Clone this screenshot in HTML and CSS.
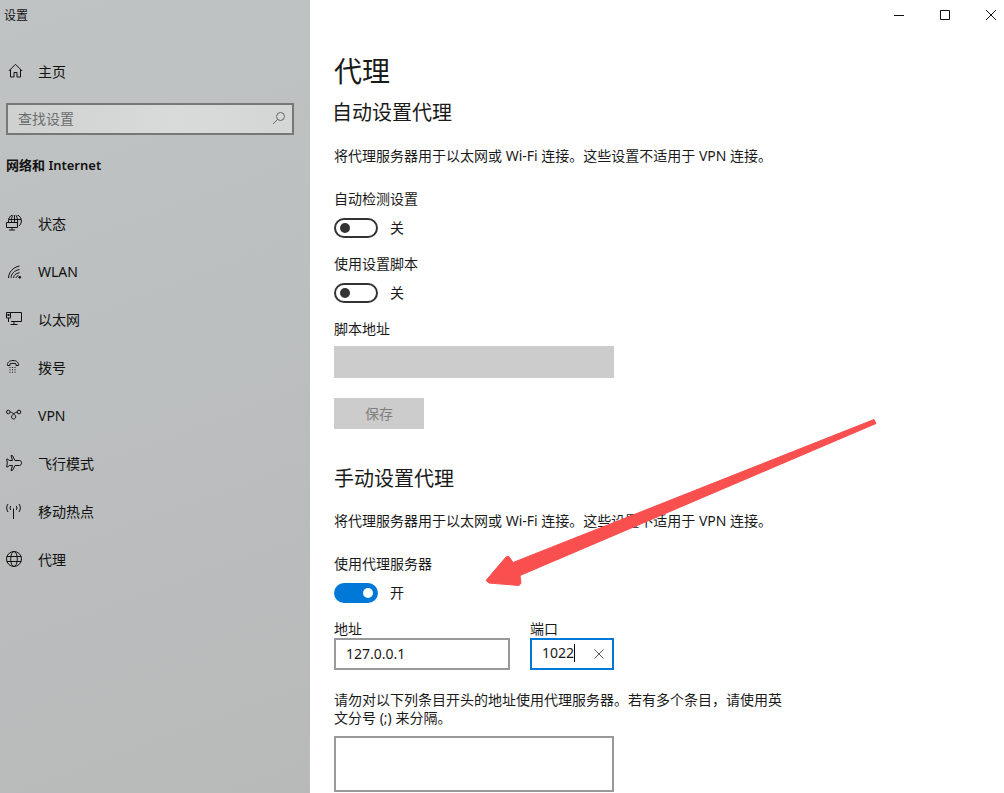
FILE: index.html
```html
<!DOCTYPE html>
<html lang="zh-CN">
<head>
<meta charset="utf-8">
<title>设置</title>
<link rel="stylesheet" href="styles.css">
</head>
<body>
<div class="app">
  <aside class="sidebar">
    <div class="app-title">设置</div>
    <div class="nav-item nav-home">
      <svg class="icon" viewBox="0 0 16 16"><path d="M.8 8 7.500 1.300 14.200 8M2.500 6.500v7.500h3.500V9.500h3V14h3.500V6.500"/></svg>
      <span class="home-label">主页</span>
    </div>
    <div class="search">
      <span>查找设置</span>
      <svg class="search-icon" viewBox="0 0 14 14"><circle cx="8.500" cy="5.500" r="4"/><path d="M5.600 8.400 1 13"/></svg>
    </div>
    <div class="section-head">网络和 Internet</div>
    <nav class="nav-list">
      <div class="nav-item">
        <svg class="icon" viewBox="0 0 16 16"><path d="M2.600 7.500A6.500 6.500 0 1 1 13 11M2.500 4.500H15M8.500.2V7.500M5.600 7.500C5 5 5.500 2 7 .5M11.300 9.500C12 6.500 11.800 3 10 .5M.5 7.500h11v5H.5zM6 12.500v2.500M3 15h6"/></svg>
        <span>状态</span>
      </div>
      <div class="nav-item">
        <svg class="icon icon-wifi" viewBox="0 0 16 16"><path d="M2.500 15C2.700 9.500 6.500 4.500 13.500 3M5 15c.2-4 3-7.500 8.500-8.500M7.500 15c.2-2.500 2-4.600 6-5.300M10 15c.2-1.200 1-2 2.500-2.300"/><circle class="solid" cx="13.800" cy="14.300" r="1.300"/></svg>
        <span>WLAN</span>
      </div>
      <div class="nav-item">
        <svg class="icon" viewBox="0 0 16 16"><path d="M4.500 1.500H15.500V10.500H5M8 10.500V13.500M4.500 13.500H11.500M.5 1.500H4.500V7H.5zM2.500 7V11"/><rect class="solid" x="1.500" y="3" width="2" height="2"/></svg>
        <span>以太网</span>
      </div>
      <div class="nav-item">
        <svg class="icon" viewBox="0 0 16 16"><path d="M1.500 6.500C1 3.500 3.500 1.500 7 1.500s6 2 5.500 5H10V4.800C9 4.200 5 4.200 4 4.800V6.500Z"/><path class="dots" d="M3.500 8.500h7M3.500 10.800h7M3.500 13.200h7"/></svg>
        <span>拨号</span>
      </div>
      <div class="nav-item">
        <svg class="icon" viewBox="0 0 16 16"><circle cx="2.300" cy="5" r="1.800"/><circle cx="13" cy="5" r="1.800"/><path d="M4.100 5c2 .2 4 2 5.200 3.500 1.200 1.800-.2 3.500-1.700 3.500-1.700 0-2.700-1.800-1.700-3.300C7 7 9 5.500 11.200 5"/></svg>
        <span>VPN</span>
      </div>
      <div class="nav-item">
        <svg class="icon" viewBox="0 0 16 16"><path d="M5 .6h1.500L9 5.500h4.500c1 0 2.300 1.200 2.300 2.500s-1.300 2.500-2.300 2.500H9L6.500 15.400H5L6.500 10.500H3.200L1.800 12H.7L1.300 8 .7 4H1.800L3.200 5.500H6.500Z"/></svg>
        <span>飞行模式</span>
      </div>
      <div class="nav-item">
        <svg class="icon" viewBox="0 0 16 16"><path d="M7.500 5.500V16M2 1C.2 3.300.2 6.500 2 9M13 1c1.800 2.300 1.800 5.500 0 8M4.800 3C3.800 4.300 3.800 5.800 4.800 7M10.200 3c1 1.300 1 2.800 0 4"/></svg>
        <span>移动热点</span>
      </div>
      <div class="nav-item">
        <svg class="icon" viewBox="0 0 16 16"><circle cx="8" cy="8" r="7.500"/><ellipse cx="8" cy="8" rx="3.300" ry="7.500"/><path d="M.8 5.500h14.400M.8 10.500h14.400"/></svg>
        <span>代理</span>
      </div>
    </nav>
  </aside>

  <main class="main">
    <div class="window-controls">
      <svg class="win-btn" viewBox="0 0 46 30"><path d="M18 15.500h10"/></svg>
      <svg class="win-btn" viewBox="0 0 46 30"><path d="M18.500 10.500h9v9h-9z"/></svg>
      <svg class="win-btn" viewBox="0 0 46 30"><path d="M18 10l10 10M28 10 18 20"/></svg>
    </div>
    <h1 class="page-title">代理</h1>
    <h2 class="group-title first">自动设置代理</h2>
    <p class="text desc">将代理服务器用于以太网或 Wi-Fi 连接。这些设置不适用于 VPN 连接。</p>
    <div class="text field-label">自动检测设置</div>
    <div class="switch-row"><span class="switch"></span><span class="text">关</span></div>
    <div class="text field-label">使用设置脚本</div>
    <div class="switch-row"><span class="switch"></span><span class="text">关</span></div>
    <div class="text field-label">脚本地址</div>
    <div class="disabled-input"></div>
    <div class="disabled-button">保存</div>
    <h2 class="group-title second">手动设置代理</h2>
    <p class="text desc manual">将代理服务器用于以太网或 Wi-Fi 连接。这些设置不适用于 VPN 连接。</p>
    <div class="text field-label">使用代理服务器</div>
    <div class="switch-row"><span class="switch on"></span><span class="text">开</span></div>
    <div class="addr-row">
      <div class="addr-col">
        <label class="text">地址</label>
        <div class="input"><span>127.0.0.1</span></div>
      </div>
      <div class="port-col">
        <label class="text">端口</label>
        <div class="input focus"><span class="caret-text">1022</span>
          <svg class="clear" viewBox="0 0 10 10"><path d="M.5.500l9 9M9.500.500l-9 9"/></svg>
        </div>
      </div>
    </div>
    <p class="text exclude">请勿对以下列条目开头的地址使用代理服务器。若有多个条目，请使用英文分号 (;) 来分隔。</p>
    <div class="textarea"></div>
  </main>
</div>
<svg class="arrow" viewBox="0 0 1004 793"><path d="M874 419.500 876 423.500 520 575.500 521 583 519 585.500 489 583 486 580.500 506 557 509 556.500 513 562.500Z"/></svg>
</body>
</html>
```
FILE: styles.css
```css
* { box-sizing: border-box; }
html, body { margin: 0; height: 793px; overflow: hidden; background: #fff; }
body {
  position: relative;
  font-family: "Noto Sans", "Noto Sans CJK SC", sans-serif;
  font-size: 14px;
  color: #1a1a1a;
}
.app { display: flex; height: 793px; overflow: hidden; }

.sidebar {
  flex: 0 0 310px;
  padding-left: 6px;
  background: linear-gradient(160deg, #c0c3c3 0%, #bcbfbf 45%, #b8baba 100%);
  color: #111;
}
.app-title { height: 30px; line-height: 31px; margin-left: -2px; font-size: 12px; }
.nav-item { display: flex; align-items: center; gap: 16px; height: 48px; }
.nav-home { margin-top: 17px; padding-left: 2px; }
.home-label { margin-left: -2px; }
.icon {
  flex: 0 0 16px; width: 16px; height: 16px;
  fill: none; stroke: #111; stroke-width: 1;
}
.icon .solid { fill: #111; stroke: none; }
.icon .dots { stroke-dasharray: 1 1.500; }
.search {
  display: flex; align-items: center; justify-content: space-between;
  width: 288px; height: 32px; margin-top: 8px; padding: 0 6px 2px 10px;
  border: 2px solid #777;
  background: linear-gradient(90deg, #cfd1d1, #d9dbdb 60%, #d4d6d6);
  color: #6b6d6d;
}
.search-icon { width: 14px; height: 14px; fill: none; stroke: #666; stroke-width: 1; }
.section-head { margin-top: 20px; line-height: 20px; font-size: 13px; font-weight: 600; }
.nav-list { margin-top: 24px; }

.main { flex: 0 0 694px; min-width: 0; padding-left: 24px; }
.window-controls { display: flex; justify-content: flex-end; height: 30px; margin-right: -10px; }
.win-btn { flex: 0 0 46px; width: 46px; height: 30px; fill: none; stroke: #111; stroke-width: 1; }
.page-title { margin: 21px 0 0; font-size: 28px; line-height: 40px; font-weight: 400; }
.group-title { margin: 0; font-size: 20px; line-height: 28px; font-weight: 400; }
.group-title.first { margin: 8px 0 0 -2px; }
.group-title.second { margin-top: 36px; }
.text { font-size: 14px; line-height: 20px; }
.desc { margin: 19px 0 0; }
.desc.manual { margin-top: 18px; }
.field-label { margin-top: 23px; }
.switch-row + .field-label { margin-top: 16px; }
.switch-row { display: flex; align-items: center; gap: 12px; height: 20px; margin-top: 9px; }
.switch {
  position: relative; display: block; width: 44px; height: 20px;
  border: 2px solid #333; border-radius: 10px;
}
.switch::after {
  content: ""; position: absolute; left: 4px; top: 3px;
  width: 10px; height: 10px; border-radius: 50%; background: #333;
}
.switch.on { background: #0078d7; border-color: #0078d7; }
.switch.on::after { left: 27px; background: #fff; }
.disabled-input { width: 280px; height: 32px; margin-top: 7px; background: #ccc; }
.disabled-button {
  width: 90px; height: 31px; margin-top: 20px; background: #ccc; color: #7f7f7f;
  text-align: center; line-height: 31px;
}
.addr-row { display: flex; gap: 20px; margin-top: 17px; }
.addr-col { width: 176px; }
.port-col { width: 84px; }
.addr-row label { display: block; height: 18px; line-height: 18px; }
.input {
  display: flex; align-items: center; justify-content: space-between;
  height: 32px; padding: 0 8px 2px 10px; border: 2px solid #999; font-size: 14px;
}
.input.focus { border-color: #0078d7; }
.caret-text { border-right: 1px solid #000; line-height: 18px; height: 18px; }
.clear { width: 10px; height: 10px; margin-top: 2px; fill: none; stroke: #555; stroke-width: 1; }
.exclude { width: 450px; margin: 21px 0 0; line-height: 18px; }
.textarea { width: 280px; height: 56px; margin-top: 9px; border: 2px solid #999; }

.arrow { position: absolute; left: 0; top: 0; width: 1004px; height: 793px; pointer-events: none; }
.arrow path { fill: #f94f4f; stroke: #f94f4f; stroke-width: 1; stroke-linejoin: round; }
```
